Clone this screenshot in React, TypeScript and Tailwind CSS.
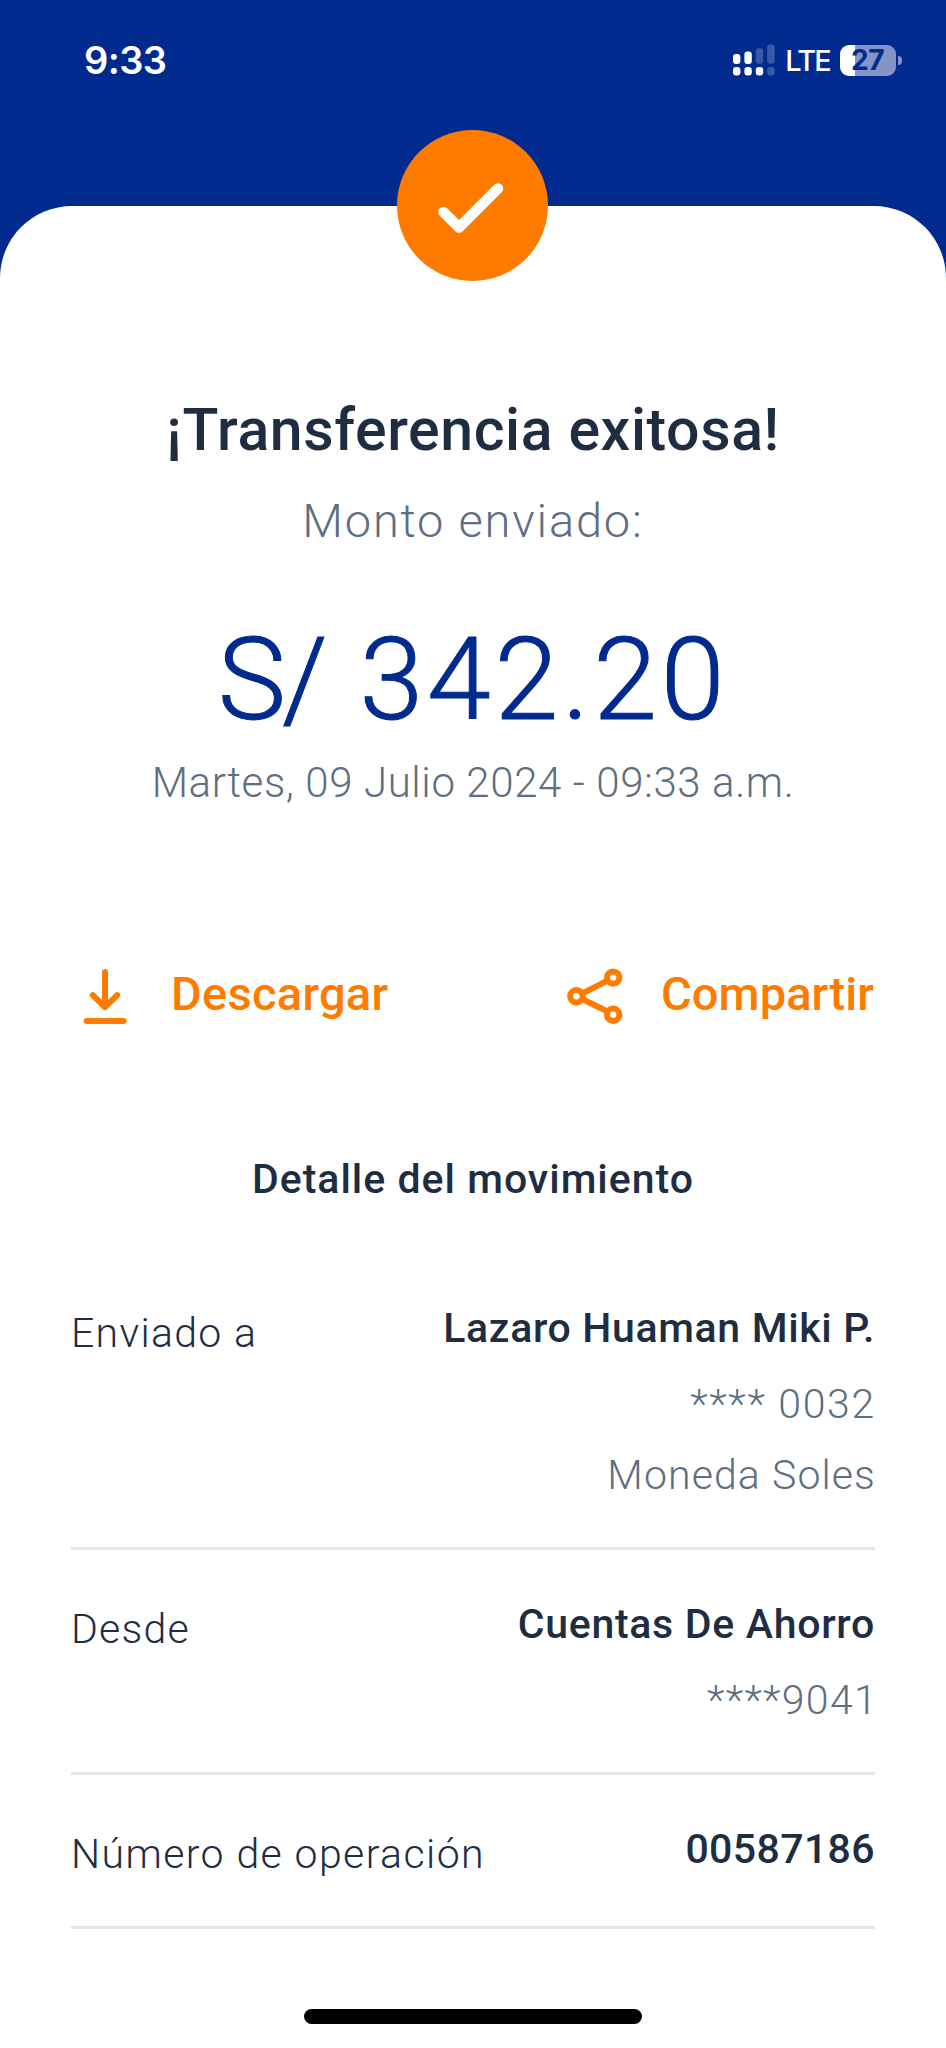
import React from 'react';

const movements = [
    {
        label: 'Enviado a',
        labelClass: 'tracking-[1.3px]',
        value: 'Lazaro Huaman Miki P.',
        valueClass: 'tracking-[0.65px]',
        extra: [
            { text: '**** 0032', className: 'mt-[26px] -mr-[1px] tracking-[1.7px]' },
            { text: 'Moneda Soles', className: 'mt-[21px] -mr-[1px] tracking-[1.1px]' },
        ],
    },
    {
        label: 'Desde',
        labelClass: 'tracking-[1.2px]',
        value: 'Cuentas De Ahorro',
        valueClass: 'tracking-[0.7px]',
        extra: [{ text: '****9041', className: 'mt-[26px] -mr-[3px] tracking-[1.3px]' }],
    },
    {
        label: 'Número de operación',
        labelClass: 'tracking-[1.4px]',
        value: '00587186',
        valueClass: 'tracking-[0.4px]',
        extra: [],
    },
];

const SignalIcon = () => (
    <svg width="42" height="32" viewBox="0 0 42 32" fill="#fff">
        <rect x="0" y="10" width="7.4" height="10" rx="3" />
        <rect x="11.4" y="7.6" width="7.4" height="12.4" rx="3" />
        <g opacity="0.22">
            <rect x="22.8" y="4.2" width="7.4" height="15.6" rx="3" />
            <rect x="34.2" y="0.6" width="7.4" height="19.2" rx="3" />
            <rect x="34.2" y="23" width="7.4" height="8.4" rx="3.2" />
        </g>
        <rect x="0" y="23" width="7.4" height="8.4" rx="3.2" />
        <rect x="11.4" y="23" width="7.4" height="8.4" rx="3.2" />
        <rect x="22.8" y="23" width="7.4" height="8.4" rx="3.2" />
    </svg>
);

const Battery = () => (
    <div className="flex items-center gap-[2px]">
        <div className="flex h-[31px] w-[56px] items-center justify-center rounded-[9px] bg-[linear-gradient(to_right,#fff_15px,#8494c6_15px)] pr-[1px]">
            <span className="font-[Inter] text-[28px] leading-none font-bold tracking-[-0.5px] text-[#002a8d]">
                27
            </span>
        </div>
        <div className="h-[9px] w-[4px] rounded-r-full bg-[#8494c6]" />
    </div>
);

const DownloadIcon = () => (
    <svg
        className="mt-[2px]"
        width="44"
        height="56"
        viewBox="0 0 44 56"
        fill="none"
        stroke="currentColor"
        strokeWidth="6"
        strokeLinecap="round"
        strokeLinejoin="round"
    >
        <path d="M22 4v35M9.8 27.2L22 39.2l12.2-12M3.6 53h37" />
    </svg>
);

const ShareIcon = () => (
    <svg
        className="mt-[2px]"
        width="56"
        height="56"
        viewBox="0 0 56 56"
        fill="none"
        stroke="currentColor"
        strokeWidth="6"
    >
        <path d="M15 25.6L41 12.4M15 31L41 43.6" />
        <circle cx="9.4" cy="28.3" r="6.2" />
        <circle cx="46.2" cy="9.6" r="6.2" />
        <circle cx="46.2" cy="46.8" r="6.2" />
    </svg>
);

const App = () => {
    return (
        <div className="h-[2048px] w-[946px] overflow-hidden bg-[#002a8d] font-[Roboto,sans-serif] text-[#1f2d43]">
            <header className="flex h-[206px] items-start justify-between pt-[44px] pr-[44px] pl-[84px] text-white">
                <span className="font-[Inter] text-[38px] leading-[32px] font-semibold tracking-[-0.6px]">
                    9:33
                </span>
                <div className="flex h-[32px] items-center">
                    <SignalIcon />
                    <span className="mt-[2px] mr-[10px] ml-[10px] font-[Inter] text-[29px] leading-[32px] font-medium tracking-[-1.8px]">
                        LTE
                    </span>
                    <Battery />
                </div>
            </header>

            <main className="flex h-[1842px] flex-col items-center rounded-t-[72px] bg-white">
                <div className="-mt-[76px] mr-[2px] flex size-[151px] shrink-0 items-center justify-center rounded-full bg-[#ff7b00]">
                    <svg
                        className="mt-[5px] mr-[2px]"
                        width="66"
                        height="50"
                        viewBox="0 0 66 50"
                        fill="none"
                        stroke="#fff"
                        strokeWidth="10.5"
                        strokeLinecap="round"
                        strokeLinejoin="round"
                    >
                        <path d="M5.5 29L21 44.5L60 5.5" />
                    </svg>
                </div>

                <h1 className="mt-[114px] text-[59px] leading-[70px] font-medium tracking-[0.6px] whitespace-nowrap">
                    ¡Transferencia exitosa!
                </h1>
                <p className="mt-[26px] text-[47px] leading-[60px] font-light tracking-[1.8px] text-[#5f6e80]">
                    Monto enviado:
                </p>
                <p className="mt-[64px] text-[115px] leading-[130px] font-light tracking-[3.7px] text-[#002a8d] [-webkit-text-stroke:1px_#002a8d]">
                    <span className="mr-[4px] tracking-[-4px]">S/</span> 342.20
                </p>
                <p className="mt-[13px] text-[42px] leading-[50px] font-light tracking-[0.6px] text-[#5f6e80]">
                    Martes, 09 Julio 2024 - 09:33 a.m.
                </p>

                <div className="mt-[158px] flex h-[60px] w-full items-start justify-between pr-[72px] pl-[83px] text-[47px] leading-[56px] font-medium text-[#ff7b00]">
                    <button className="flex items-start gap-[44px] tracking-[0.3px]">
                        <DownloadIcon />
                        Descargar
                    </button>
                    <button className="flex items-start gap-[38px] tracking-[0.1px]">
                        <ShareIcon />
                        Compartir
                    </button>
                </div>

                <h2 className="mt-[128px] text-[41px] leading-[50px] font-medium tracking-[1px]">
                    Detalle del movimiento
                </h2>

                <div className="mt-[50px] w-[804px] text-[41px] leading-[50px]">
                    {movements.map((item) => (
                        <div
                            key={item.label}
                            className="flex items-start justify-between border-b-[3px] border-[#e5e6ea] pt-[49px] pb-[47px]"
                        >
                            <span className={'mt-[5px] font-light ' + item.labelClass}>
                                {item.label}
                            </span>
                            <div className="flex flex-col items-end">
                                <span className={'font-medium ' + item.valueClass}>
                                    {item.value}
                                </span>
                                {item.extra.map((line) => (
                                    <span
                                        key={line.text}
                                        className={'font-light text-[#5f6e80] ' + line.className}
                                    >
                                        {line.text}
                                    </span>
                                ))}
                            </div>
                        </div>
                    ))}
                </div>

                <div className="mt-[80px] h-[15px] w-[338px] rounded-full bg-black" />
            </main>
        </div>
    );
};

export default App;
